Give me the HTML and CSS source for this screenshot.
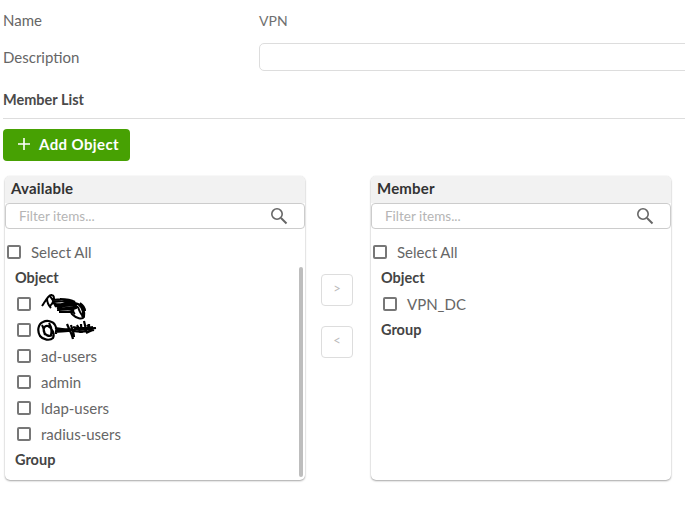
FILE: index.html
```
<!DOCTYPE html>
<html lang="en">
<head>
<meta charset="utf-8">
<title>VPN</title>
<link rel="stylesheet" href="styles.css">
</head>
<body>
<div class="form-row name-row"><span class="label">Name</span><span class="value">VPN</span></div>
<div class="form-row desc-row"><span class="label">Description</span><input class="desc-input" type="text"></div>
<h2 class="section">Member List</h2>
<button class="add-btn"><svg width="14" height="14" viewBox="0 0 14 14"><path d="M7 1v12M1 7h12" stroke="#fff" stroke-width="1.6" fill="none"/></svg><span>Add Object</span></button>
<div class="transfer">
  <section class="panel">
    <header class="panel-head">Available</header>
    <div class="filter"><span>Filter items...</span><svg class="search" width="18" height="18" viewBox="0 0 18 18"><circle cx="7" cy="7" r="5.2" fill="none" stroke="#666" stroke-width="1.6"/><path d="M11 11l5.5 5.5" stroke="#666" stroke-width="2" fill="none"/></svg></div>
    <div class="panel-body">
      <label class="select-all"><i class="box"></i>Select All</label>
      <div class="scrollbar"></div>
      <div class="group first-group">Object</div>
      <div class="item"><i class="box"></i><svg class="scribble first" width="48" height="28" viewBox="0 0 48 28"><path d="M1 13C5 7 8 1 11 2c4 1 1 9-2 11M9 3c3 4 5 9 8 9 5-1 13-4 20-1 6 3 7 9 6 13-2 3-8 1-11-2-3-2-2-6 3-7M6 5c0 4 2 8 4 10M11 5c1 3 2 6 4 9M12 7c6-1 14-2 22 2M13 9c6-1 16-1 24 2M14 11c7 0 14 0 22 1M15 13c6 1 15-2 22 1M16 15c5 1 13-1 20 0M16 17c5 0 11-1 17 0M18 19c4 0 10 0 14 0M19 6c5 0 10 0 15 3M38 12c4 3 5 9 3 12M34 13c-2 3-3 6 0 8M39 10c3 2 5 4 5 8M37 14c1 3 2 6 4 8" fill="none" stroke="#000" stroke-width="2"/></svg></div>
      <div class="item"><i class="box"></i><svg class="scribble second" width="60" height="24" viewBox="0 0 60 24"><path d="M6 3C1 5 0 12 3 17c3 4 10 5 13 2 2-4-1-10-5-12-3-1-5 2-4 6 1 3 5 5 8 3M6 3c4-2 10-1 12 3 2 3 1 6 1 9M5 6c2 3 2 7 3 10M12 4c2 3 3 8 2 12M18 9c6 1 12 2 17 1M18 13c6-1 12 0 17-2M19 11c6 0 12 0 18 0M30 5c2 5 5 10 6 15M34 6c1 4 3 8 3 12M36 8c5 2 14 1 20 0M36 12c6 1 13 1 21-1M37 10c7 1 14 0 22-1M40 6c2 3 3 5 3 8M44 5c0 3 1 6 1 9M47 2c1 4 2 8 2 11M50 6c2 2 5 5 6 5-3 1-5 2-7 3M52 5c0 3 0 6 1 8" fill="none" stroke="#000" stroke-width="2.2"/></svg></div>
      <label class="item"><i class="box"></i>ad-users</label>
      <label class="item"><i class="box"></i>admin</label>
      <label class="item"><i class="box"></i>ldap-users</label>
      <label class="item"><i class="box"></i>radius-users</label>
      <div class="group">Group</div>
    </div>
  </section>
  <div class="moves">
    <button class="move">&gt;</button>
    <button class="move">&lt;</button>
  </div>
  <section class="panel">
    <header class="panel-head">Member</header>
    <div class="filter"><span>Filter items...</span><svg class="search" width="18" height="18" viewBox="0 0 18 18"><circle cx="7" cy="7" r="5.2" fill="none" stroke="#666" stroke-width="1.6"/><path d="M11 11l5.5 5.5" stroke="#666" stroke-width="2" fill="none"/></svg></div>
    <div class="panel-body">
      <label class="select-all"><i class="box"></i>Select All</label>
      <div class="group first-group">Object</div>
      <label class="item"><i class="box"></i>VPN_DC</label>
      <div class="group">Group</div>
    </div>
  </section>
</div>
</body>
</html>
```
FILE: styles.css
```
* { box-sizing: border-box; }
html, body { margin: 0; padding: 0; background: #fff; overflow: hidden; }
body {
  width: 685px;
  height: 531px;
  font-family: "Lato", "Liberation Sans", sans-serif;
  font-size: 15px;
  color: #666;
  padding-left: 3px;
}
.form-row { display: flex; align-items: center; }
.label { flex: none; width: 256px; }
.value { color: #707070; font-size: 14px; }
.name-row { height: 20px; margin-top: 10px; }
.desc-row { height: 28px; margin-top: 13px; }
.desc-input {
  flex: none;
  width: 440px;
  height: 28px;
  border: 1px solid #ddd;
  border-radius: 5px;
  background: #fff;
}
.section {
  margin: 19px 0 0;
  height: 29px;
  padding-top: 1px;
  font-size: 14.5px;
  font-weight: 700;
  color: #4a4a4a;
  border-bottom: 1px solid #ddd;
  line-height: 18px;
}
.add-btn {
  display: flex;
  align-items: center;
  width: 127px;
  height: 32px;
  margin-top: 10px;
  padding: 0 0 2px 14px;
  gap: 8px;
  border: 0;
  border-radius: 4px;
  background: #47a103;
  color: #fff;
  font: 700 15px "Lato", sans-serif;
  letter-spacing: .4px;
}
.transfer {
  display: flex;
  align-items: flex-start;
  margin: 15px 0 0 2px;
}
.panel {
  position: relative;
  width: 300px;
  height: 304px;
  border-radius: 5px;
  background: #fff;
  box-shadow: 0 1px 2px rgba(0,0,0,.35), 0 0 1px rgba(0,0,0,.12);
}
.panel-head {
  height: 27px;
  padding: 4px 6px 0;
  background: #f2f2f2;
  border-radius: 5px 5px 0 0;
  font-size: 15px;
  font-weight: 700;
  color: #333;
  line-height: 17px;
  letter-spacing: .2px;
}
.filter {
  display: flex;
  align-items: center;
  justify-content: space-between;
  height: 26px;
  padding: 0 16px 0 13px;
  background: #fff;
  border: 1px solid #ccc;
  border-radius: 4px;
  font-size: 13.5px;
  color: #b5b5b5;
}
.panel-body { position: relative; padding-top: 13px; }
.box {
  display: block;
  flex: none;
  width: 14px;
  height: 14px;
  border: 2px solid #777;
  border-radius: 2px;
  background: #fff;
}
.select-all {
  display: flex;
  align-items: center;
  gap: 10px;
  height: 20px;
  padding-left: 2px;
}
.group {
  height: 26px;
  padding: 3px 0 0 10px;
  font-weight: 700;
  font-size: 14.5px;
  line-height: 20px;
  color: #444;
}
.first-group { margin-top: 3px; }
.item {
  display: flex;
  align-items: center;
  gap: 10px;
  height: 26px;
  padding-left: 12px;
}
.scribble { flex: none; }
.scribble.first { margin: 6px 0 0 0; }
.scribble.second { margin: 2px 0 0 -4px; }
.scrollbar {
  position: absolute;
  top: 38px;
  right: 2px;
  width: 4px;
  height: 210px;
  border-radius: 2px;
  background: #bdbdbd;
}
.moves {
  display: flex;
  flex-direction: column;
  gap: 20px;
  width: 66px;
  padding: 98px 0 0 16px;
}
.move {
  width: 32px;
  height: 32px;
  padding: 0 0 4px;
  border: 1px solid #ddd;
  border-radius: 4px;
  background: #fff;
  color: #bbb;
  font: 13px "Lato", sans-serif;
}
```
